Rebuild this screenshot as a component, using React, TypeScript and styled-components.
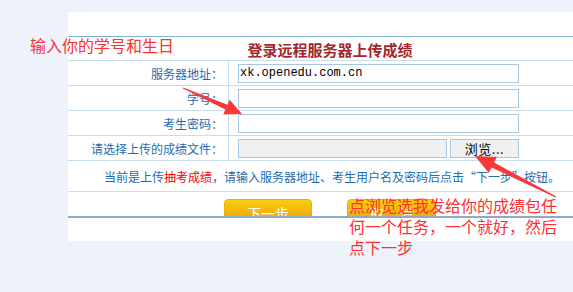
import React from "react";
import styled, { createGlobalStyle } from "styled-components";

const Global = createGlobalStyle`
  html, body { margin: 0; padding: 0; }
  body {
    background: #eef2fb;
    overflow: hidden;
    width: 573px;
    height: 292px;
    font-family: "Noto Sans CJK SC", "Liberation Sans", sans-serif;
  }
`;

const Page = styled.div`
  position: relative;
  width: 573px;
  height: 292px;
  overflow: hidden;
  padding: 12px 0 0 68px;
  box-sizing: border-box;
`;

const Panel = styled.div`
  width: 524px;
  background: #ffffff;
  padding: 24px 0 23px;
`;

const Table = styled.div`
  border-top: 1px solid #80b2cf;
  display: flex;
  flex-direction: column;
`;

const TitleRow = styled.div`
  height: 24px;
  border-bottom: 1px solid #c9dcec;
  display: flex;
  align-items: center;
  justify-content: center;
  color: #a4272b;
  font-weight: bold;
  font-size: 15px;
  padding-top: 2px;
  box-sizing: border-box;
`;

const FieldRow = styled.div`
  height: 25px;
  display: grid;
  grid-template-columns: 161px 1fr;
  border-bottom: 1px solid #c9dcec;
  box-sizing: border-box;
`;

const Label = styled.div`
  border-right: 1px solid #c9dcec;
  display: flex;
  align-items: center;
  justify-content: flex-end;
  padding-right: 5px;
  color: #1c6cb4;
  font-size: 12px;
`;

const Value = styled.div`
  display: flex;
  align-items: center;
  padding-left: 9px;
  gap: 3px;
`;

const TextInput = styled.div<{ $w: number; $bg?: string }>`
  width: ${(p) => p.$w}px;
  height: 19px;
  box-sizing: border-box;
  border: 1px solid #a7c8e2;
  background: ${(p) => p.$bg || "#ffffff"};
  font-family: "Liberation Mono", monospace;
  font-size: 12px;
  color: #000;
  display: flex;
  align-items: center;
  padding-left: 1px;
`;

const BrowseButton = styled.div`
  width: 69px;
  height: 19px;
  box-sizing: border-box;
  border: 1px solid #a7c8e2;
  background: #f0f0f0;
  font-size: 13px;
  color: #000;
  display: flex;
  align-items: center;
  justify-content: center;
  letter-spacing: 0.5px;
`;

const InfoRow = styled.div`
  height: 31px;
  border-bottom: 1px solid #d2dde7;
  box-sizing: border-box;
  display: flex;
  align-items: center;
  justify-content: center;
  font-size: 12px;
  color: #1c6cb4;
  padding-left: 4px;
`;

const Red = styled.span`
  color: #ff0000;
`;

const ButtonRow = styled.div`
  height: 26px;
  border-bottom: 2px solid #8eaac4;
  box-sizing: border-box;
  display: flex;
  justify-content: center;
  gap: 35px;
  padding: 7px 0 0 0;
  overflow: hidden;
`;

const OrangeButton = styled.div<{ $w: number }>`
  width: ${(p) => p.$w}px;
  height: 26px;
  flex-shrink: 0;
  box-sizing: border-box;
  border-radius: 4px 4px 0 0;
  border: 1px solid #e9b10a;
  background: linear-gradient(#f6cf0c, #f19a12);
  color: #ffffff;
  font-size: 14px;
  display: flex;
  justify-content: center;
  padding-top: 3px;
  word-spacing: 12px;
`;

const Note = styled.div<{ $x: number; $y: number }>`
  position: absolute;
  left: ${(p) => p.$x}px;
  top: ${(p) => p.$y}px;
  color: #ff3030;
  font-size: 16px;
  line-height: 21px;
  white-space: pre;
`;

const Overlay = styled.svg`
  position: absolute;
  left: 0;
  top: 0;
  pointer-events: none;
`;

function arrowPoints(tx: number, ty: number, hx: number, hy: number, headLen: number, headHalf: number, tailHalf: number, shaftHalf: number) {
  const dx = hx - tx;
  const dy = hy - ty;
  const len = Math.hypot(dx, dy);
  const ux = dx / len;
  const uy = dy / len;
  const nx = -uy;
  const ny = ux;
  const bx = hx - ux * headLen;
  const by = hy - uy * headLen;
  const pts = [
    [tx + nx * tailHalf, ty + ny * tailHalf],
    [bx + nx * shaftHalf, by + ny * shaftHalf],
    [bx + nx * headHalf, by + ny * headHalf],
    [hx, hy],
    [bx - nx * headHalf, by - ny * headHalf],
    [bx - nx * shaftHalf, by - ny * shaftHalf],
    [tx - nx * tailHalf, ty - ny * tailHalf],
  ];
  return pts.map((p) => p.map((v) => v.toFixed(1)).join(",")).join(" ");
}

export default function App() {
  return (
    <>
      <Global />
      <Page>
        <Panel>
          <Table>
            <TitleRow>登录远程服务器上传成绩</TitleRow>
            <FieldRow>
              <Label>服务器地址：</Label>
              <Value>
                <TextInput $w={281}>xk.openedu.com.cn</TextInput>
              </Value>
            </FieldRow>
            <FieldRow>
              <Label>学号：</Label>
              <Value>
                <TextInput $w={281} />
              </Value>
            </FieldRow>
            <FieldRow>
              <Label>考生密码：</Label>
              <Value>
                <TextInput $w={281} />
              </Value>
            </FieldRow>
            <FieldRow>
              <Label>请选择上传的成绩文件：</Label>
              <Value>
                <TextInput $w={209} $bg="#f0f0f0" />
                <BrowseButton>浏览...</BrowseButton>
              </Value>
            </FieldRow>
            <InfoRow>
              当前是上传<Red>抽考成绩</Red>，请输入服务器地址、考生用户名及密码后点击“下一步”按钮。
            </InfoRow>
            <ButtonRow>
              <OrangeButton $w={88}>下一步</OrangeButton>
              <OrangeButton $w={89}>取 消</OrangeButton>
            </ButtonRow>
          </Table>
        </Panel>
        <Note $x={30} $y={35}>输入你的学号和生日</Note>
        <Note $x={349} $y={195}>{"点浏览选我发给你的成绩包任\n何一个任务，一个就好，然后\n点下一步"}</Note>
        <Overlay width={573} height={292} viewBox="0 0 573 292">
          <polygon points={arrowPoints(183, 88, 242, 114, 17, 8, 0.6, 2.6)} fill="#fa3838" />
          <polygon points={arrowPoints(556, 197, 475, 156, 20, 9, 0.6, 2.8)} fill="#fa3838" />
        </Overlay>
      </Page>
    </>
  );
}
